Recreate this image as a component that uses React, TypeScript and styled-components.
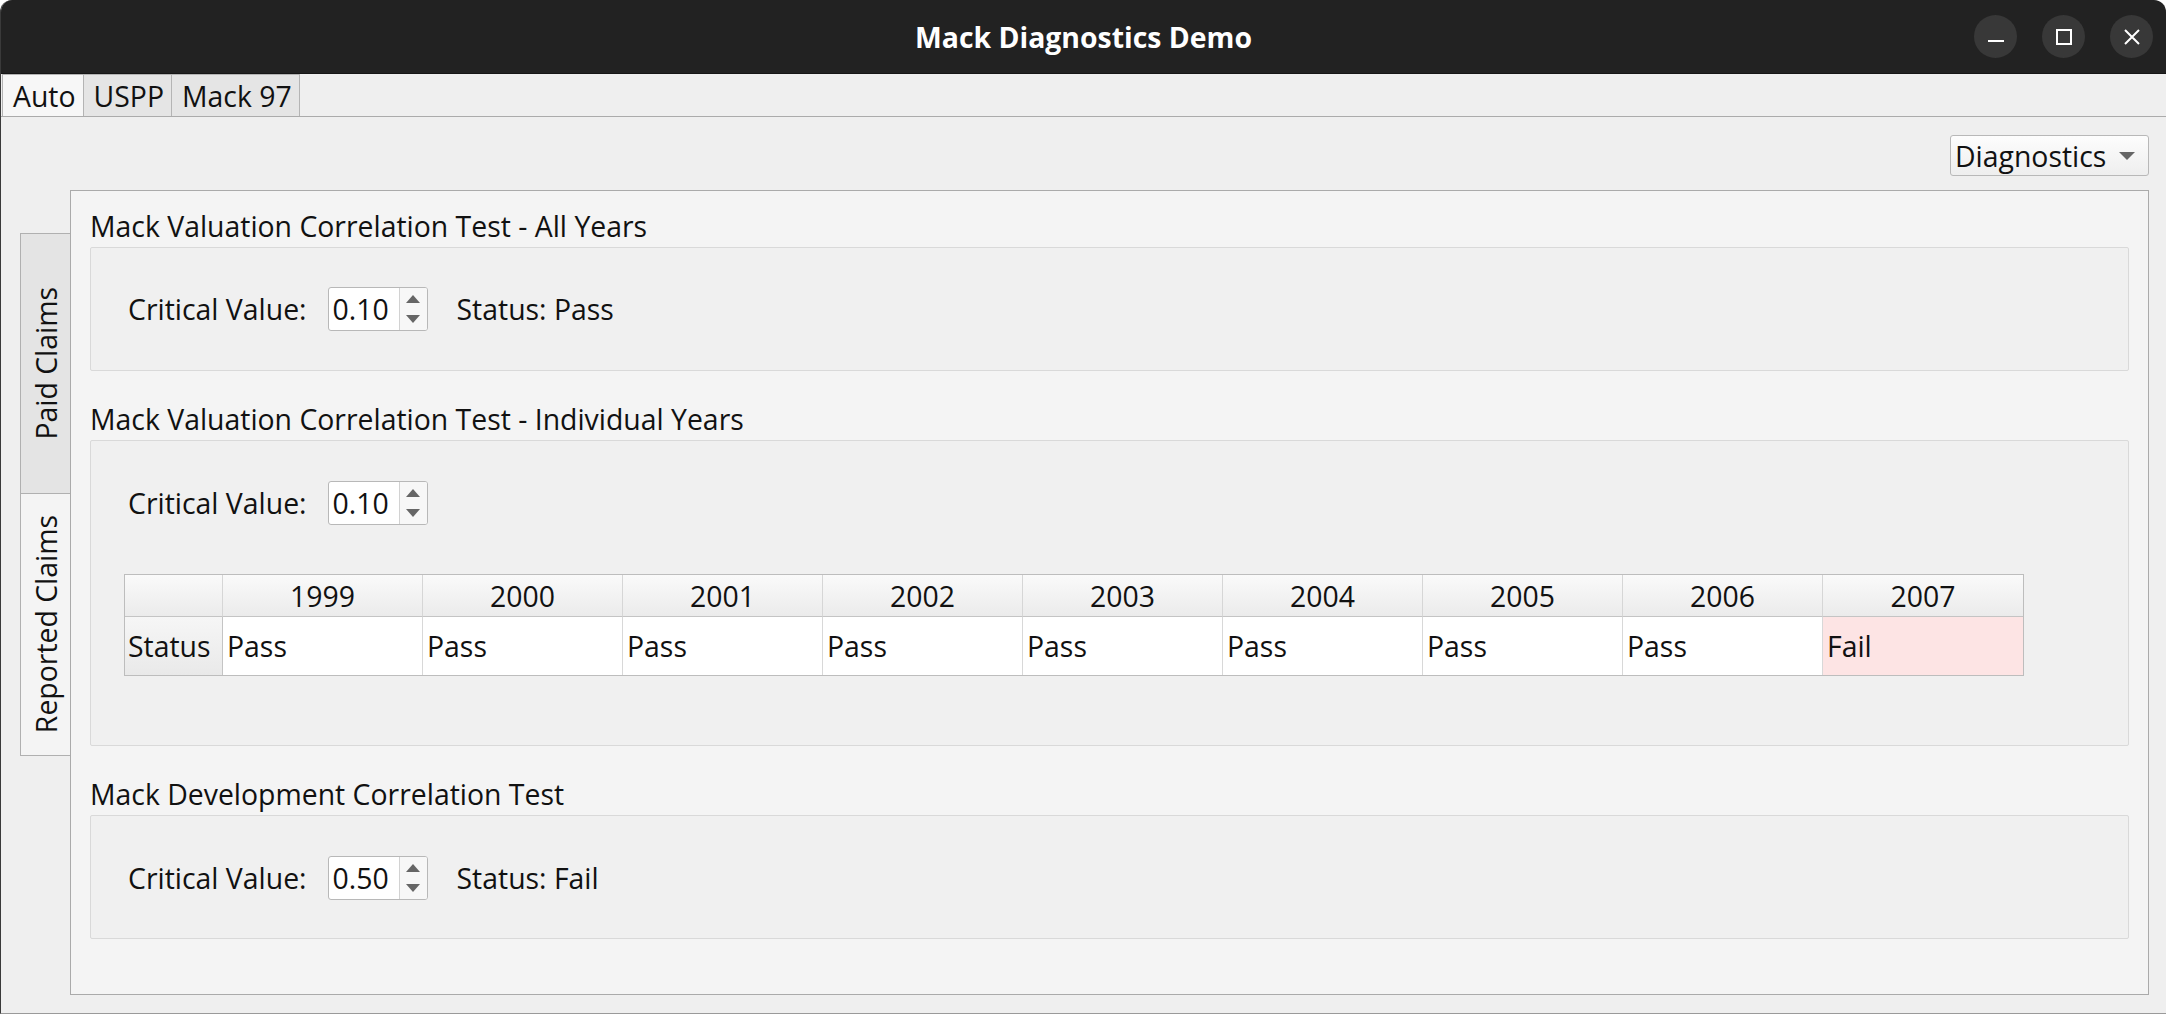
import React from "react";
import styled, { createGlobalStyle } from "styled-components";

const FONT = `"Open Sans", "Noto Sans", sans-serif`;
const FS = "28.4px";

const GlobalStyle = createGlobalStyle`
  html, body {
    margin: 0;
    padding: 0;
    background: #ffffff;
  }
  body {
    font-family: ${FONT};
    color: #111;
  }
  * { box-sizing: border-box; }
`;

const Window = styled.div`
  width: 2166px;
  height: 1014px;
  display: flex;
  flex-direction: column;
  border-radius: 12px 12px 0 0;
  overflow: hidden;
  background: #efefef;
  border-left: 1px solid #3a3a3a;
  border-bottom: 1px solid #9a9a9a;
`;

const TitleBar = styled.header`
  height: 74px;
  flex: none;
  display: grid;
  grid-template-columns: 1fr auto 1fr;
  align-items: center;
  background: #222222;
  border-bottom: 1px solid #161616;
  padding: 0 13px;
`;

const Title = styled.h1`
  margin: 0;
  grid-column: 2;
  color: #ffffff;
  font-size: 28.4px;
  font-weight: 700;
`;

const WindowButtons = styled.div`
  grid-column: 3;
  justify-self: end;
  display: flex;
  gap: 25px;
`;

const WinButton = styled.div`
  width: 43px;
  height: 43px;
  border-radius: 50%;
  background: #383838;
  display: flex;
  align-items: center;
  justify-content: center;
`;

const TabBar = styled.nav`
  flex: none;
  display: flex;
  height: 43px;
  padding-left: 1px;
  border-bottom: 1px solid #ababab;
`;

const TopTab = styled.div<{ $active?: boolean }>`
  height: 42px;
  display: flex;
  align-items: center;
  padding: 0 7px 0 10px;
  font-size: ${FS};
  border: 1px solid #b4b4b4;
  border-bottom: none;
  margin-right: -1px;
  background: ${(p) => (p.$active ? "#f7f7f7" : "#e5e5e5")};
`;

const Content = styled.main`
  flex: 1;
  min-height: 0;
  display: flex;
  flex-direction: column;
  gap: 14px;
  padding: 18px 17px 18px 19px;
`;

const Combo = styled.div`
  align-self: flex-end;
  width: 199px;
  height: 41px;
  display: flex;
  align-items: center;
  justify-content: space-between;
  padding: 0 13px 0 4px;
  font-size: ${FS};
  border: 1px solid #b8b8b8;
  border-radius: 3px;
  background: linear-gradient(#fdfdfd, #eeeeee);
`;

const ComboArrow = styled.span`
  width: 0;
  height: 0;
  border-left: 8px solid transparent;
  border-right: 8px solid transparent;
  border-top: 8px solid #666;
`;

const SideTabWidget = styled.section`
  flex: 1;
  min-height: 0;
  display: flex;
`;

const SideTabColumn = styled.div`
  width: 50px;
  flex: none;
  padding-top: 43px;
  display: flex;
  flex-direction: column;
`;

const SideTab = styled.div<{ $active?: boolean; $h: number }>`
  height: ${(p) => p.$h}px;
  display: flex;
  align-items: center;
  justify-content: center;
  font-size: ${FS};
  border: 1px solid #b0b0b0;
  border-right: none;
  margin-top: ${(p) => (p.$active ? "-1px" : "0")};
  background: ${(p) => (p.$active ? "#f4f4f4" : "#e4e4e4")};
`;

const SideTabLabel = styled.span`
  writing-mode: vertical-rl;
  transform: rotate(180deg);
  white-space: nowrap;
`;

const Pane = styled.div`
  flex: 1;
  background: #f4f4f4;
  border: 1px solid #aaaaaa;
  padding: 16px 19px 0 19px;
  display: flex;
  flex-direction: column;
  gap: 29px;
`;

const Group = styled.div`
  display: flex;
  flex-direction: column;
  gap: 4px;
`;

const GroupTitle = styled.div`
  font-size: ${FS};
  line-height: 36px;
  height: 36px;
  padding-top: 1px;
`;

const GroupBox = styled.div<{ $pad: string }>`
  border: 1px solid #d9d9d9;
  border-radius: 2px;
  background: #f0f0f0;
  padding: ${(p) => p.$pad};
  display: flex;
  flex-direction: column;
  gap: 49px;
`;

const FieldRow = styled.div`
  display: flex;
  align-items: center;
  height: 44px;
  padding-left: 4px;
  font-size: ${FS};
`;

const Label = styled.span`
  margin-right: 21px;
`;

const Status = styled.span`
  margin-left: 29px;
`;

const Spin = styled.div`
  width: 100px;
  height: 44px;
  display: flex;
  border: 1px solid #b8b8b8;
  border-radius: 3px;
  background: #ffffff;
  overflow: hidden;
`;

const SpinValue = styled.div`
  width: 71px;
  display: flex;
  align-items: center;
  padding-left: 4px;
  font-size: ${FS};
  border-right: 1px solid #d2d2d2;
`;

const SpinButtons = styled.div`
  flex: 1;
  display: flex;
  flex-direction: column;
  align-items: center;
  justify-content: center;
  gap: 12px;
  background: #f7f7f7;
`;

const Arrow = styled.span<{ $up?: boolean }>`
  width: 0;
  height: 0;
  border-left: 7px solid transparent;
  border-right: 7px solid transparent;
  ${(p) =>
    p.$up ? "border-bottom: 8px solid #666;" : "border-top: 8px solid #666;"}
`;

const Table = styled.div`
  display: grid;
  grid-template-columns: 98px repeat(9, 200px);
  grid-template-rows: 42px 58px;
  width: max-content;
  border: 1px solid #bdbdbd;
  font-size: ${FS};
`;

const HeaderCell = styled.div<{ $last?: boolean }>`
  display: flex;
  align-items: center;
  justify-content: center;
  background: linear-gradient(#fafafa, #ebebeb);
  border-right: ${(p) => (p.$last ? "none" : "1px solid #d6d6d6")};
  border-bottom: 1px solid #c4c4c4;
`;

const RowHeader = styled.div`
  display: flex;
  align-items: center;
  padding-left: 3px;
  background: linear-gradient(#f6f6f6, #e9e9e9);
  border-right: 1px solid #c4c4c4;
`;

const DataCell = styled.div<{ $fail?: boolean; $last?: boolean }>`
  display: flex;
  align-items: center;
  padding-left: 4px;
  background: ${(p) => (p.$fail ? "#fde4e4" : "#ffffff")};
  border-right: ${(p) => (p.$last ? "none" : "1px solid #d8d8d8")};
`;

const years = ["1999", "2000", "2001", "2002", "2003", "2004", "2005", "2006", "2007"];
const statuses = ["Pass", "Pass", "Pass", "Pass", "Pass", "Pass", "Pass", "Pass", "Fail"];

function SpinBox({ value }: { value: string }) {
  return (
    <Spin>
      <SpinValue>{value}</SpinValue>
      <SpinButtons>
        <Arrow $up />
        <Arrow />
      </SpinButtons>
    </Spin>
  );
}

function IconMin() {
  return (
    <svg width="16" height="16" viewBox="0 0 16 16">
      <rect x="0" y="11" width="16" height="2" fill="#fff" />
    </svg>
  );
}
function IconMax() {
  return (
    <svg width="16" height="16" viewBox="0 0 16 16">
      <rect x="1" y="1" width="14" height="14" fill="none" stroke="#fff" strokeWidth="2" />
    </svg>
  );
}
function IconClose() {
  return (
    <svg width="16" height="16" viewBox="0 0 16 16">
      <path d="M1 1 L15 15 M15 1 L1 15" stroke="#fff" strokeWidth="2" />
    </svg>
  );
}

export default function App() {
  return (
    <>
      <GlobalStyle />
      <Window>
        <TitleBar>
          <Title>Mack Diagnostics Demo</Title>
          <WindowButtons>
            <WinButton><IconMin /></WinButton>
            <WinButton><IconMax /></WinButton>
            <WinButton><IconClose /></WinButton>
          </WindowButtons>
        </TitleBar>
        <TabBar>
          <TopTab $active>Auto</TopTab>
          <TopTab>USPP</TopTab>
          <TopTab>Mack 97</TopTab>
        </TabBar>
        <Content>
          <Combo>
            Diagnostics
            <ComboArrow />
          </Combo>
          <SideTabWidget>
            <SideTabColumn>
              <SideTab $h={261}><SideTabLabel>Paid Claims</SideTabLabel></SideTab>
              <SideTab $active $h={263}><SideTabLabel>Reported Claims</SideTabLabel></SideTab>
            </SideTabColumn>
            <Pane>
              <Group>
                <GroupTitle>Mack Valuation Correlation Test - All Years</GroupTitle>
                <GroupBox $pad="39px 33px 39px">
                  <FieldRow>
                    <Label>Critical Value:</Label>
                    <SpinBox value="0.10" />
                    <Status>Status: Pass</Status>
                  </FieldRow>
                </GroupBox>
              </Group>
              <Group>
                <GroupTitle>Mack Valuation Correlation Test - Individual Years</GroupTitle>
                <GroupBox $pad="40px 33px 69px">
                  <FieldRow>
                    <Label>Critical Value:</Label>
                    <SpinBox value="0.10" />
                  </FieldRow>
                  <Table>
                    <HeaderCell />
                    {years.map((y, i) => (
                      <HeaderCell key={y} $last={i === years.length - 1}>{y}</HeaderCell>
                    ))}
                    <RowHeader>Status</RowHeader>
                    {statuses.map((s, i) => (
                      <DataCell key={i} $fail={s === "Fail"} $last={i === statuses.length - 1}>{s}</DataCell>
                    ))}
                  </Table>
                </GroupBox>
              </Group>
              <Group>
                <GroupTitle>Mack Development Correlation Test</GroupTitle>
                <GroupBox $pad="40px 33px 38px">
                  <FieldRow>
                    <Label>Critical Value:</Label>
                    <SpinBox value="0.50" />
                    <Status>Status: Fail</Status>
                  </FieldRow>
                </GroupBox>
              </Group>
            </Pane>
          </SideTabWidget>
        </Content>
      </Window>
    </>
  );
}
